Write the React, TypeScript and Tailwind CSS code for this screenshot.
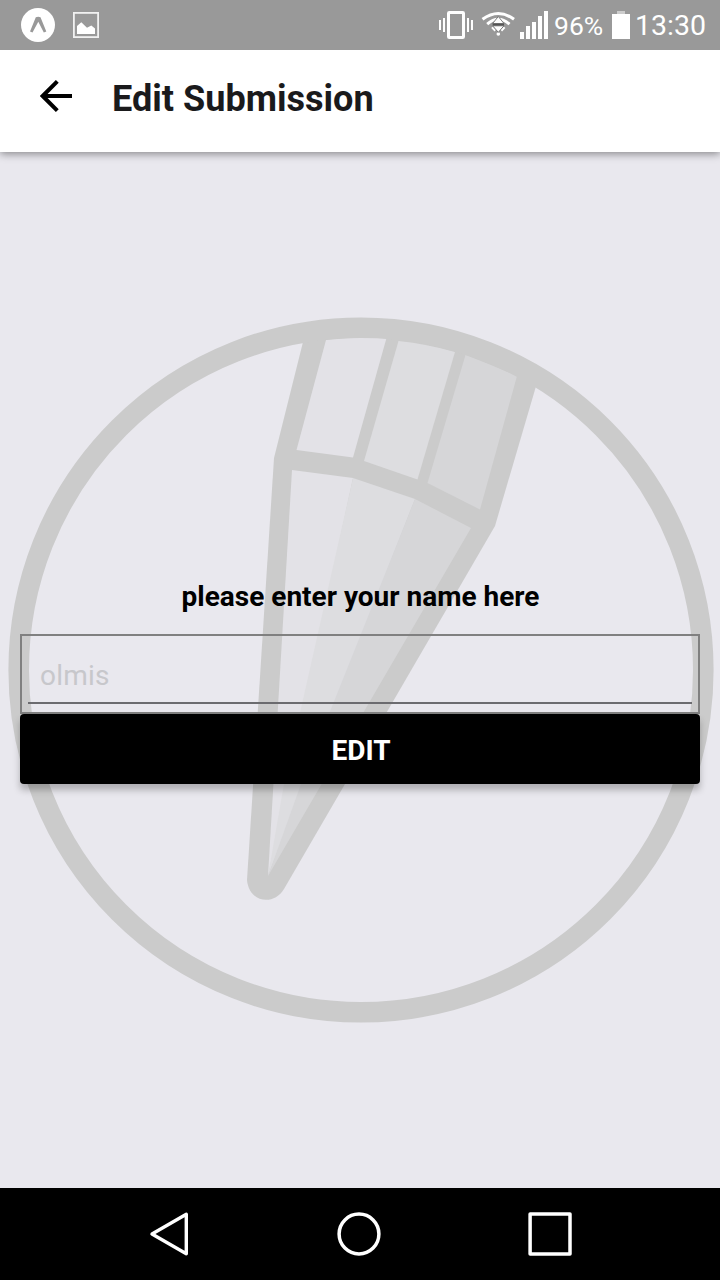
function StatusBar() {
  return (
    <div className="relative z-20 flex h-[50px] shrink-0 items-center bg-[#999999] text-white">
      <svg className="ml-[21px] h-[50px] w-[34px]" viewBox="0 0 34 50">
        <circle cx="17" cy="25" r="17" fill="#fff" />
        <path d="M9 31.500 L14.800 17.200 Q17.200 16.500 19.500 17.200 L25.300 31.500 L22.800 32.500 L17.300 21.700 L11.500 32.500 Z" fill="#999" />
      </svg>
      <svg className="ml-[18px] h-[50px] w-[26px]" viewBox="0 0 26 50">
        <rect x="0.9" y="12.9" width="24.2" height="24.2" fill="none" stroke="#f1f1f1" strokeWidth="1.8" />
        <path d="M4 34 V26 L8.300 22.300 L14 27.700 L18.300 25.400 L22 28.500 V34 Z" fill="#fff" />
      </svg>
      <svg className="ml-[340px] h-[50px] w-[35px]" viewBox="439 0 35 50">
        <rect x="448.5" y="12.5" width="15" height="25" rx="0.8" fill="none" stroke="#fff" strokeWidth="3" />
        <path d="M440 20 V30 M444 18 V32 M468 18 V32 M472 20 V30" stroke="#fff" strokeWidth="2" />
      </svg>
      <svg className="ml-[7px] h-[50px] w-[35px]" viewBox="481 0 35 50">
        <path d="M482.5 19.300 Q498.3 7.600 514 19.300" fill="none" stroke="#fff" strokeWidth="3" />
        <path d="M487.2 24.2 Q498.3 14.400 509.5 24.2" fill="none" stroke="#fff" strokeWidth="3" />
        <path d="M492 27.300 L495.300 30.600 M504.600 27.300 L501.300 30.600" fill="none" stroke="#fff" strokeWidth="2.200" />
        <circle cx="498.300" cy="34" r="1.800" fill="#fff" />
        <path d="M498.3 16.5 L504 23.5 H492.600 Z M492.600 25.800 H504 L498.3 32.300 Z" fill="#fff" stroke="#707070" strokeWidth="0.900" />
        <path d="M492.700 24.600 H504" stroke="#555" strokeWidth="1.800" />
      </svg>
      <svg className="ml-[4px] h-[50px] w-[28px]" viewBox="520 0 28 50">
        <path d="M520 32 h4 v7 h-4z M526 26 h4 v13 h-4z M532 22 h4 v17 h-4z M538 16 h4 v23 h-4z M544 11 h4 v28 h-4z" fill="#fff" />
      </svg>
      <span className="ml-[6px] w-[58px] pt-[2px] text-[26.5px] leading-none">96%</span>
      <svg className="h-[50px] w-[18px]" viewBox="612 0 18 50">
        <path d="M617 11h8v3h-8z" fill="#ccc" />
        <path d="M612 14h18v25h-18z" fill="#fff" />
      </svg>
      <span className="ml-[5px] whitespace-nowrap pt-[2px] text-[28.5px] leading-none">13:30</span>
    </div>
  );
}

function PencilLogo() {
  return (
    <svg className="absolute inset-0 h-full w-full" viewBox="0 152 720 1036">
      <path d="M306 330 A342.5 342.5 0 0 1 539 376 L495 526 L284 889 C274 906 249 903 247 880 L274 458 Z" fill="#cbcbcb" />
      <path d="M326 340 A332 332 0 0 1 386.500 338 L353 457.500 L296.500 450 Z" fill="#e3e2e7" />
      <path d="M398.500 341 A332 332 0 0 1 455 352 L417.500 479.500 L364 461 Z" fill="#dddde0" />
      <path d="M465.500 355 Q492 365 517 376 L480 509.500 L427.500 483 Z" fill="#d6d6d8" />
      <path d="M292 470 L353 478 L268 876 Z" fill="#e3e2e7" />
      <path d="M353 478 L415 499 L268 876 L284 784 Z" fill="#dddde0" />
      <path d="M415 499 L471 528 L268 876 L301 784 Z" fill="#d6d6d8" />
      <circle cx="361" cy="670" r="342.300" fill="none" stroke="#cbcbcb" strokeWidth="20.600" />
    </svg>
  );
}

export default function App() {
  return (
    <div className="flex h-[1280px] w-[720px] flex-col overflow-hidden bg-[#e9e8ee] font-['Roboto',sans-serif]">
      <StatusBar />
      <header className="z-10 flex h-[102px] shrink-0 items-center bg-white shadow-[0_2px_8px_rgba(0,0,0,0.42)]">
        <svg className="ml-[40px] mt-[-10px] h-[32px] w-[32px]" viewBox="0 0 32 32">
          <path d="M32 16 H3 M17.300 1.400 L2.700 16 L17.300 30.600" fill="none" stroke="#000" strokeWidth="4" />
        </svg>
        <h1 className="ml-[40px] mt-[-4px] text-[36.1px] font-bold leading-[48px] text-[#1a1a1c]">Edit Submission</h1>
      </header>
      <main className="relative flex flex-1 flex-col">
        <PencilLogo />
        <form className="relative mt-[426px] flex flex-col px-5" onSubmit={(e) => e.preventDefault()}>
          <label htmlFor="name" className="h-[56px] pl-px text-center text-[28px] font-bold leading-[38px] text-black">
            please enter your name here
          </label>
          <div className="h-[80px] border-2 border-[#808080] px-1.5">
            <input
              id="name"
              placeholder="olmis"
              className="block h-[68px] w-full border-b-2 border-[#6b6b6f] bg-transparent px-3 pt-[13px] text-[28px] tracking-[0.2px] outline-none placeholder:text-[#c7c7cb]"
            />
          </div>
          <button className="h-[70px] rounded-[4px] bg-black pl-[2px] pt-[4px] text-[28px] font-bold text-white shadow-[0_6px_7px_rgba(0,0,0,0.25)]">
            EDIT
          </button>
        </form>
      </main>
      <nav className="flex h-[92px] shrink-0 items-center bg-black">
        <svg className="ml-[149px] h-[46px] w-[40px]" viewBox="149 1211 40 46">
          <path d="M186.300 1214.300 V1253.700 L152 1234 Z" fill="none" stroke="#fff" strokeWidth="3.400" strokeLinejoin="round" />
        </svg>
        <svg className="ml-[147px] h-[46px] w-[46px]" viewBox="336 1211 46 46">
          <circle cx="359" cy="1234" r="19.900" fill="none" stroke="#fff" strokeWidth="3.500" />
        </svg>
        <svg className="ml-[145px] h-[46px] w-[46px]" viewBox="527 1211 46 46">
          <rect x="530.100" y="1214.100" width="39.900" height="39.900" fill="none" stroke="#fff" strokeWidth="3.500" strokeLinejoin="round" />
        </svg>
      </nav>
    </div>
  );
}
